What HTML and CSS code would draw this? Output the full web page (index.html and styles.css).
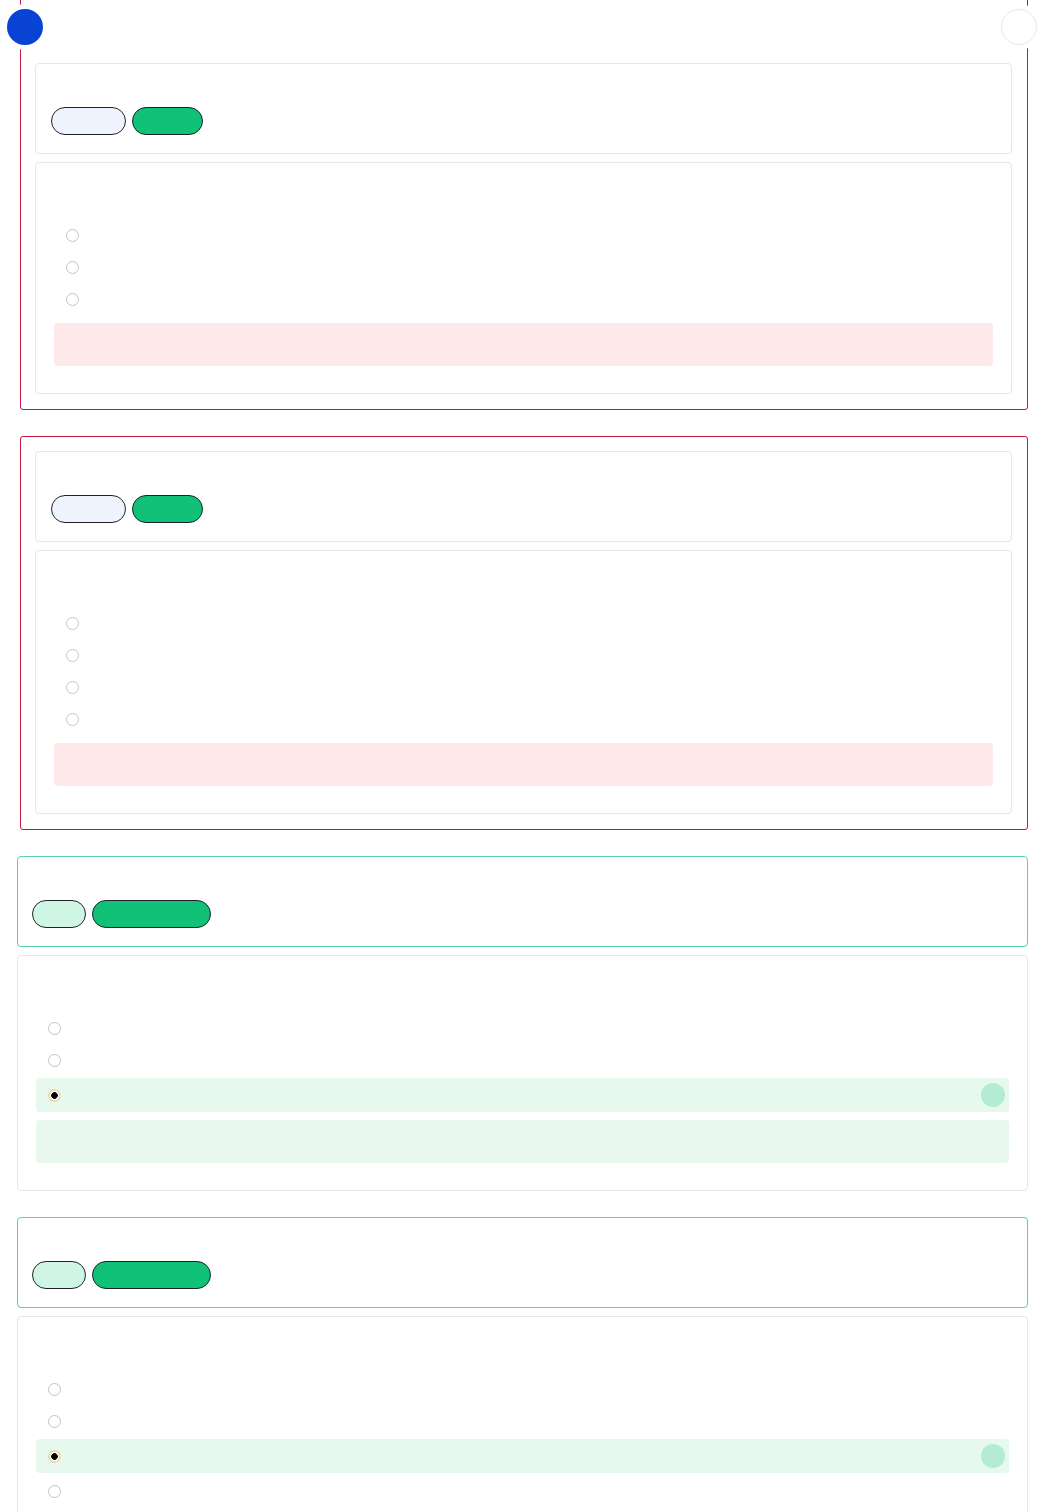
FILE: index.html
```html
<!DOCTYPE html>
<html lang="en">

<head>
  <meta charset="UTF-8">
  <meta name="viewport" content="width=device-width, initial-scale=1.0">
  <title>Quiz Review</title>
  <link rel="stylesheet" href="styles.css">
</head>

<body>
  <!-- floating controls -->
  <div class="fab fab-number"></div>
  <div class="fab fab-flag"></div>

  <main class="quiz">
    <!-- question 1: wrong -->
    <section class="group group-wrong group-first">
      <div class="q-head">
        <div class="q-title"></div>
        <div class="tags">
          <span class="tag tag-topic"></span>
          <span class="tag tag-status"></span>
        </div>
      </div>
      <div class="q-body">
        <div class="q-text"></div>
        <ul class="options">
          <li class="option"><span class="radio"></span></li>
          <li class="option"><span class="radio"></span></li>
          <li class="option"><span class="radio"></span></li>
        </ul>
        <div class="feedback feedback-wrong"></div>
      </div>
    </section>

    <!-- question 2: wrong -->
    <section class="group group-wrong">
      <div class="q-head">
        <div class="q-title"></div>
        <div class="tags">
          <span class="tag tag-topic"></span>
          <span class="tag tag-status"></span>
        </div>
      </div>
      <div class="q-body">
        <div class="q-text"></div>
        <ul class="options">
          <li class="option"><span class="radio"></span></li>
          <li class="option"><span class="radio"></span></li>
          <li class="option"><span class="radio"></span></li>
          <li class="option"><span class="radio"></span></li>
        </ul>
        <div class="feedback feedback-wrong"></div>
      </div>
    </section>

    <!-- question 3: right -->
    <section class="group group-right">
      <div class="q-head">
        <div class="q-title"></div>
        <div class="tags">
          <span class="tag tag-topic"></span>
          <span class="tag tag-status"></span>
        </div>
      </div>
      <div class="q-body">
        <div class="q-text"></div>
        <ul class="options">
          <li class="option"><span class="radio"></span></li>
          <li class="option"><span class="radio"></span></li>
          <li class="option selected"><span class="radio"></span><span class="check"></span></li>
        </ul>
        <div class="feedback feedback-right"></div>
      </div>
    </section>

    <!-- question 4: right -->
    <section class="group group-right">
      <div class="q-head">
        <div class="q-title"></div>
        <div class="tags">
          <span class="tag tag-topic"></span>
          <span class="tag tag-status"></span>
        </div>
      </div>
      <div class="q-body">
        <div class="q-text"></div>
        <ul class="options">
          <li class="option"><span class="radio"></span></li>
          <li class="option"><span class="radio"></span></li>
          <li class="option selected"><span class="radio"></span><span class="check"></span></li>
          <li class="option"><span class="radio"></span></li>
        </ul>
        <div class="feedback feedback-right"></div>
      </div>
    </section>
  </main>
</body>

</html>
```

FILE: styles.css
```css
body {
  margin: 0;
  font-family: "Liberation Sans", Arial, sans-serif;
  background-color: #ffffff;
}

/* Floating buttons */
.fab {
  position: fixed;
  top: 9px;
  width: 36px;
  height: 36px;
  border-radius: 50%;
  box-shadow: 0 0 0 5px #ffffff;
  box-sizing: border-box;
  z-index: 10;
}

.fab-number {
  left: 7px;
  background-color: #0843d4;
}

.fab-flag {
  right: 7px;
  background-color: #ffffff;
  border: 1px solid #e5e7eb;
}

.quiz {
  display: flex;
  flex-direction: column;
  gap: 26px;
  padding: 0 16px 40px 17px;
}

/* Question wrappers */
.group {
  display: flex;
  flex-direction: column;
  gap: 8px;
}

.group-wrong {
  margin-left: 3px;
  border: 1px solid #c2183f;
  border-radius: 3px;
  padding: 14px 15px 15px 14px;
}

.group-first {
  margin-top: -10px;
  padding-top: 72px;
}

.q-head {
  border: 1px solid #e5e7eb;
  border-radius: 4px;
  padding: 15px 15px 18px;
}

.group-right .q-head {
  border-color: #5ccfa4;
  padding-left: 14px;
}

.q-title {
  height: 22px;
  margin-bottom: 6px;
}

.tags {
  display: flex;
  gap: 6px;
}

.tag {
  height: 28px;
  border: 1px solid #1f2328;
  border-radius: 14px;
  box-sizing: border-box;
}

.tag-topic {
  width: 75px;
  background-color: #eef3fe;
}

.tag-status {
  width: 71px;
  background-color: #10c177;
}

.group-right .tag-topic {
  width: 54px;
  background-color: #cff5e4;
}

.group-right .tag-status {
  width: 119px;
}

/* Question body */
.q-body {
  border: 1px solid #e5e7eb;
  border-radius: 4px;
  padding: 18px 18px 27px;
}

.q-text {
  height: 38px;
}

.options {
  list-style: none;
  margin: 0;
  padding: 0;
}

.option {
  display: flex;
  align-items: center;
  height: 32px;
  padding: 0 4px 0 12px;
  border-radius: 4px;
}

.option.selected {
  height: 34px;
  margin: 2px 0;
  background-color: #e7f8ef;
}

.radio {
  width: 13px;
  height: 13px;
  border: 1px solid #c4c4c4;
  border-radius: 50%;
  box-sizing: border-box;
  background-color: #ffffff;
}

.selected .radio {
  border: 2px solid #eadcab;
  background: radial-gradient(circle, #000000 0 3px, #ffffff 3.6px);
}

.check {
  width: 24px;
  height: 24px;
  margin-left: auto;
  border-radius: 50%;
  background-color: #b3ebd3;
}

.feedback {
  height: 43px;
  margin-top: 8px;
  border-radius: 4px;
}

.feedback-wrong {
  background-color: #fde8ea;
}

.feedback-right {
  background-color: #e8f8ef;
}
```
